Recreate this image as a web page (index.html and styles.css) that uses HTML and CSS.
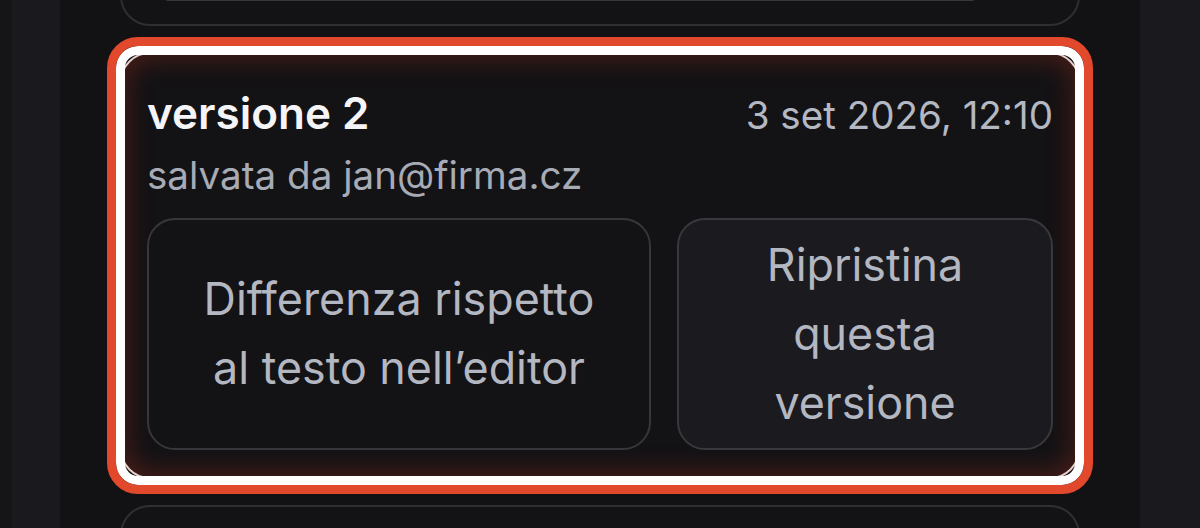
FILE: index.html
```html
<!DOCTYPE html>
<html lang="it">
<head>
<meta charset="utf-8">
<title>Versioni</title>
<link rel="stylesheet" href="styles.css">
</head>
<body>
<div class="page">
  <div class="gutter-left"><div class="gutter-edge"></div><div class="gutter-strip"></div></div>
  <main class="main">
    <div class="list">
      <section class="card card-prev">
        <div class="prev-box"></div>
      </section>
      <section class="card card-focus">
        <div class="card-head">
          <h2 class="title">versione 2</h2>
          <span class="date">3 set 2026, 12:10</span>
        </div>
        <p class="author">salvata da jan@firma.cz</p>
        <div class="actions">
          <button class="btn btn-diff">Differenza rispetto al testo nell’editor</button>
          <button class="btn btn-restore">Ripristina questa versione</button>
        </div>
      </section>
      <section class="card card-next"></section>
    </div>
  </main>
  <div class="gutter-right"></div>
</div>
</body>
</html>
```
FILE: styles.css
```css
* { box-sizing: border-box; }
html, body { margin: 0; padding: 0; }
body {
  background: #121114;
  font-family: Inter, "Noto Sans", sans-serif;
  width: 1200px;
  height: 528px;
  overflow: hidden;
}
.page {
  display: flex;
  height: 528px;
  overflow: hidden;
}
.gutter-left {
  display: flex;
  width: 60px;
  flex: none;
}
.gutter-edge { width: 12px; background: #151417; }
.gutter-strip { width: 48px; background: #1a191d; }
.gutter-right { width: 60px; flex: none; background: #1a191d; }
.main {
  width: 1080px;
  height: 528px;
  flex: none;
  padding: 0 60px;
  overflow: hidden;
}
.list {
  display: flex;
  flex-direction: column;
  gap: 26px;
  margin-top: -174px;
}
.card {
  border: 2px solid #2f2e33;
  border-radius: 30px;
  background: #131215;
}
.card-prev {
  height: 200px;
  padding: 0 103px 23px 43px;
  display: flex;
  flex-direction: column;
  justify-content: flex-end;
}
.prev-box {
  height: 60px;
  border: 2px solid #37363b;
  border-top: none;
  border-radius: 0 0 3px 3px;
}
.card-next { height: 60px; }

.card-focus {
  position: relative;
  border: 2px solid #e8cfc8;
  padding: 34px 25px 27px;
  box-shadow: inset 0 0 26px 5px rgba(130, 42, 28, 0.48);
}
.card-focus::after {
  content: "";
  position: absolute;
  inset: -17px -15px;
  border: 9px solid #e2482b;
  border-radius: 31px;
  box-shadow: inset 0 0 0 9px #ffffff;
  pointer-events: none;
}
.card-head {
  display: flex;
  justify-content: space-between;
  align-items: baseline;
}
.title {
  margin: 0;
  font-size: 44px;
  line-height: 50px;
  font-weight: 600;
  color: #f5f5f7;
}
.date {
  font-size: 38.6px;
  line-height: 50px;
  color: #b4b8c2;
}
.author {
  margin: 6px 0 0;
  font-size: 38.6px;
  line-height: 58px;
  color: #a7abb5;
}
.actions {
  display: grid;
  grid-template-columns: 504fr 376fr;
  gap: 26px;
  margin-top: 14px;
}
.btn {
  height: 232px;
  border: 2px solid #37363b;
  border-radius: 28px;
  background: #131215;
  color: #b3b7c1;
  font-family: Inter, "Noto Sans", sans-serif;
  font-size: 44.8px;
  line-height: 69px;
  padding: 0 34px;
  text-align: center;
}
.btn-restore {
  background: #1b1a1e;
  border-color: #39383d;
}
```
